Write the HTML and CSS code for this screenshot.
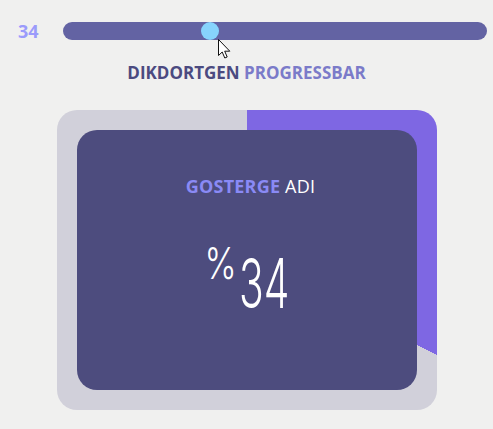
FILE: index.html
```html
<!DOCTYPE html>
<html lang="tr">
<head>
<meta charset="utf-8">
<title>Dikdortgen Progressbar</title>
<link rel="stylesheet" href="styles.css">
</head>
<body>
<div class="page">
  <div class="slider-row">
    <span class="slider-value">34</span>
    <input class="slider" type="range" min="0" max="100" value="34">
  </div>
  <h1 class="title"><span class="title-dark">DIKDORTGEN</span> <span class="title-light">PROGRESSBAR</span></h1>
  <div class="gauge">
    <div class="gauge-inner">
      <div class="gauge-name"><span class="gauge-name-bold">GOSTERGE</span> ADI</div>
      <div class="gauge-number"><span class="gauge-pct">%</span><span class="gauge-val">34</span></div>
    </div>
  </div>
  <svg class="cursor" width="13" height="20" viewBox="0 0 13 20"><path d="M0.5 0.5 L0.5 16.5 L4.2 13 L6.8 19 L9.2 18 L6.7 12.2 L11.8 12.2 Z" fill="#fff" stroke="#111" stroke-width="1" stroke-linejoin="round"/></svg>
</div>
</body>
</html>
```
FILE: styles.css
```css
html, body {
  margin: 0;
  padding: 0;
  background: #f0f0ef;
}
.page {
  position: relative;
  width: 493px;
  height: 429px;
  display: flex;
  flex-direction: column;
  align-items: center;
}
.slider-row {
  align-self: stretch;
  display: flex;
  align-items: center;
  padding: 22px 6px 0 18px;
  height: 18px;
}
.slider-value {
  font-family: "Open Sans", sans-serif;
  font-weight: 700;
  font-size: 18px;
  line-height: 18px;
  color: #9b9bfb;
  width: 45px;
}
.slider {
  -webkit-appearance: none;
  appearance: none;
  width: 424px;
  height: 18px;
  margin: 0;
  border-radius: 9px;
  background: #6363a3;
  outline: none;
}
.slider::-webkit-slider-thumb {
  -webkit-appearance: none;
  appearance: none;
  width: 18px;
  height: 18px;
  border-radius: 50%;
  background: #87d4fd;
  border: none;
}
.title {
  margin: 23px 0 0 0;
  font-family: "Open Sans", sans-serif;
  font-weight: 700;
  font-size: 17px;
  line-height: 20px;
  letter-spacing: 0;
}
.title-dark { color: #4b4a80; }
.title-light { color: #7b7bc9; }
.gauge {
  margin-top: 27px;
  width: 340px;
  height: 260px;
  padding: 20px;
  border-radius: 20px;
  background: conic-gradient(#7e67e3 0deg 116.6deg, #d1d0da 116.6deg 360deg);
}
.gauge-inner {
  height: 260px;
  border-radius: 20px;
  background: #4d4c7e;
  display: flex;
  flex-direction: column;
  align-items: center;
  box-sizing: border-box;
  padding-top: 46px;
}
.gauge-name {
  font-family: "Open Sans", sans-serif;
  font-size: 18px;
  line-height: 20px;
  letter-spacing: 0.2px;
  color: #ffffff;
  margin-left: 8px;
}
.gauge-name-bold {
  font-weight: 700;
  color: #8a8af5;
}
.gauge-number {
  margin-top: 45px;
  margin-right: 4px;
  display: flex;
  align-items: flex-start;
  color: #ffffff;
  font-family: "Inter", sans-serif;
  font-weight: 300;
}
.gauge-pct {
  font-size: 44px;
  line-height: 44px;
  display: inline-block;
  transform: scaleX(0.78);
  margin-right: -3px;
}
.gauge-val {
  font-size: 68px;
  line-height: 68px;
  display: inline-block;
  transform: scaleX(0.6);
  transform-origin: left center;
  margin-top: 8px;
  width: 50px;
}
.cursor {
  position: absolute;
  left: 218px;
  top: 39px;
}
```
